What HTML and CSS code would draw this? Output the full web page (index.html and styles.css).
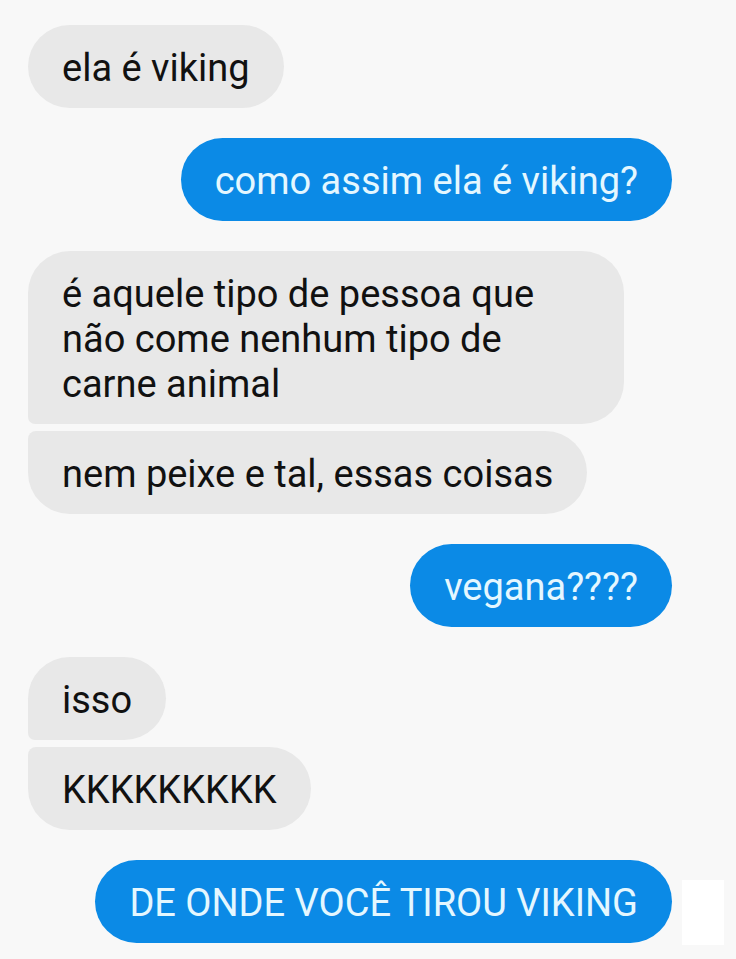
FILE: index.html
```html
<!DOCTYPE html>
<html lang="pt">
<head>
<meta charset="utf-8">
<link rel="stylesheet" href="styles.css">
</head>
<body>
<div class="chat">
  <div class="msg in single">ela é viking</div>
  <div class="msg out single gap">como assim ela é viking?</div>
  <div class="msg in first gap wide">é aquele tipo de pessoa que<br>não come nenhum tipo de<br>carne animal</div>
  <div class="msg in last tight">nem peixe e tal, essas coisas</div>
  <div class="msg out single gap">vegana????</div>
  <div class="msg in first gap">isso</div>
  <div class="msg in last tight">KKKKKKKKK</div>
  <div class="msg out single gap">DE ONDE VOCÊ TIROU VIKING</div>
</div>
<div class="patch"></div>
</body>
</html>
```
FILE: styles.css
```css
html, body {
  margin: 0;
  padding: 0;
  background: #f8f8f8;
}
body {
  width: 736px;
  height: 959px;
  overflow: hidden;
  position: relative;
  font-family: Roboto, "Noto Sans", sans-serif;
}
.chat {
  display: flex;
  flex-direction: column;
  padding: 25px 64px 0 28px;
}
.msg {
  font-size: 38px;
  line-height: 45px;
  padding: 21px 34px 17px;
  border-radius: 42px;
  white-space: nowrap;
}
.in {
  align-self: flex-start;
  background: #e8e8e8;
  color: #111;
}
.out {
  align-self: flex-end;
  background: #0b8ae6;
  color: #e4f7ff;
}
.wide {
  box-sizing: border-box;
  width: 596px;
}
.gap { margin-top: 30px; }
.tight { margin-top: 7px; }
.first { border-bottom-left-radius: 7px; }
.last { border-top-left-radius: 8px; }
.patch {
  position: absolute;
  left: 682px;
  top: 880px;
  width: 42px;
  height: 65px;
  background: #ffffff;
}
```
